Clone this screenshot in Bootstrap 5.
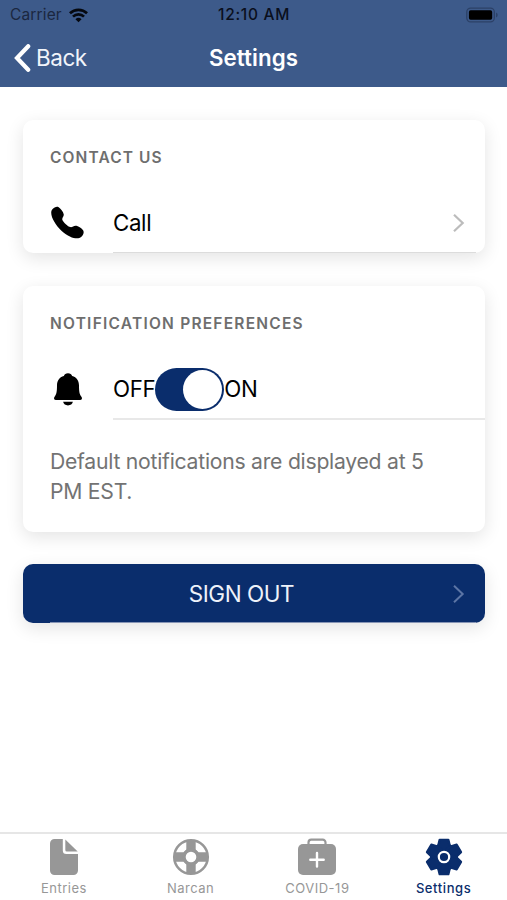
<!DOCTYPE html>
<html lang="en">
<head>
<meta charset="utf-8">
<meta name="viewport" content="width=device-width, initial-scale=1">
<title>Settings</title>
<link rel="stylesheet" href="https://cdn.jsdelivr.net/npm/bootstrap@5.3.0/dist/css/bootstrap.min.css">
<style>
  body { font-family: Inter, "Liberation Sans", sans-serif; color: #000; background: #fff; }
  svg { display: block; flex: none; }
  .screen { height: 900px; overflow: hidden; }
  .app-header { background: #3d5a8a; height: 87px; }
  .status-row { height: 30px; font-size: 15.5px; line-height: 30px; color: #0c1220; padding: 0 9px 0 10px; }
  .status-row .carrier { letter-spacing: .15px; color: #1b2740; }
  .status-row .wifi { margin-left: 7px; }
  .status-row .clock { font-weight: 500; letter-spacing: .7px; color: #0a0f1c; }
  .title-row { height: 56px; color: #fff; padding: 0 14px; }
  .back-label { font-size: 22.5px; letter-spacing: -.45px; line-height: 30px; margin-left: 5px; color: #f1f4fa; }
  .title-row h1 { font-size: 22.3px; font-weight: 600; letter-spacing: .1px; line-height: 30px; }
  .content { padding: 33px 22px 0 23px; }
  .panel { border-radius: 10px; background: #fff; box-shadow: 0 5px 18px rgba(0,0,0,.11); }
  .panel-contact { height: 133px; margin-bottom: 33px; }
  .panel-notify { height: 246px; margin-bottom: 32px; }
  .panel h2 { font-size: 15.5px; font-weight: 600; letter-spacing: 1.23px; line-height: 20px; color: #6e6e6e; padding: 28px 27px 0; }
  .panel-contact h2 { letter-spacing: 1.1px; }
  .item { height: 60px; padding-left: 27px; }
  .item-icon { width: 63px; }
  .item-body { font-size: 22.3px; letter-spacing: -.35px; line-height: 30px; }
  .item-contact { margin-top: 25px; }
  .item-contact .item-body { border-bottom: 1px solid #dcdcdc; margin-right: 9px; padding-right: 11px; padding-top: 1px; }
  .item-notify { margin-top: 25px; }
  .item-notify .item-body { border-bottom: 2px solid #e8e8e8; padding-top: 1px; height: 61px; }
  .toggle { width: 69px; height: 43px; border-radius: 22px; background: #0a2d6c; padding: 2px; }
  .toggle-knob { width: 39px; height: 39px; border-radius: 50%; background: #fff; }
  .note { font-size: 21.2px; line-height: 29.5px; letter-spacing: -.26px; color: #737373; padding: 28px 50px 0 27px; }
  .btn-signout { height: 59px; border: 0; border-radius: 10px; background: linear-gradient(#8795b5, #8795b5) 27px 100% / calc(100% - 36px) 1px no-repeat #0a2d6c; color: #eef2fa; font-size: 22.5px; letter-spacing: -.45px; box-shadow: 0 5px 18px rgba(0,0,0,.11); padding: 0 20px 0 8px; }
  .tabs { height: 68px; border-top: 2px solid #e6e6e6; }
  .tab { color: #979797; font-size: 13px; letter-spacing: .5px; line-height: 16px; padding: 4px 0 0 1px; width: 25%; }
  .tab span { margin-top: 4px; }
  .tab.current { color: #0a2d6c; font-weight: 500; letter-spacing: .6px; padding-left: 0; }
</style>
</head>
<body>
<div class="screen d-flex flex-column">
  <header class="app-header">
    <div class="status-row row g-0 align-items-center">
      <div class="col d-flex align-items-center">
        <span class="carrier">Carrier</span>
        <svg class="wifi" width="19" height="15" viewBox="0 0 20 15" fill="none" stroke="#05080f" stroke-width="2.8"><path d="M1 5.200a13 13 0 0 1 18 0M4.200 8.700a8.300 8.300 0 0 1 11.600 0"/><path d="M10 14.600 6.800 11.400a4.600 4.600 0 0 1 6.400 0z" fill="#05080f" stroke="none"/></svg>
      </div>
      <div class="col-auto clock">12:10 AM</div>
      <div class="col d-flex justify-content-end">
        <svg width="32" height="16" viewBox="0 0 33 16"><rect x=".8" y=".8" width="28.400" height="14.400" rx="4" fill="none" stroke="#2c4167" stroke-width="1.300"/><rect x="3" y="3" width="24" height="10" rx="1.800" fill="#000"/><path d="M31 5.500v5q1.700-.8 1.700-2.500T31 5.500z" fill="#2c4167"/></svg>
      </div>
    </div>
    <nav class="title-row row g-0 align-items-center">
      <a class="col d-flex align-items-center text-decoration-none" href="#">
        <svg width="17" height="28" viewBox="0 0 17 28" fill="none" stroke="#fff" stroke-width="4.200" stroke-linecap="round" stroke-linejoin="miter"><path d="M14.200 2.200 3 14l11.200 11.800"/></svg>
        <span class="back-label">Back</span>
      </a>
      <h1 class="col-auto mb-0">Settings</h1>
      <div class="col"></div>
    </nav>
  </header>

  <main class="content flex-grow-1">
    <section class="panel panel-contact">
      <h2 class="mb-0">CONTACT US</h2>
      <div class="item item-contact d-flex align-items-stretch">
        <div class="item-icon d-flex align-items-center">
          <svg width="35" height="34" viewBox="0 0 35 34"><path d="M2.400 3.200C4.300 1.300 6.800-.1 8.700 1.200c2.300 1.600 4.500 4.600 5 7 .5 2.400-2.100 3.800-1.300 5.700 1.100 2.500 5.500 6.600 7.900 7.200 2.100.5 3.600-2 6.200-1.300 2.300.6 5.200 2.600 6.600 4.500 1.300 1.900.2 4.600-2 6.700-3.200 3-11.500 1-19.400-6.100C3.900 17.700-1.200 7 2.400 3.200z"/></svg>
        </div>
        <div class="item-body flex-grow-1 d-flex justify-content-between align-items-center">
          <span>Call</span>
          <svg width="13" height="20" viewBox="0 0 13 20" fill="none" stroke="#bcbcbc" stroke-width="2.200"><path d="m2 1.700 8.700 8.300L2 18.300"/></svg>
        </div>
      </div>
    </section>

    <section class="panel panel-notify">
      <h2 class="mb-0">NOTIFICATION PREFERENCES</h2>
      <div class="item item-notify d-flex align-items-start">
        <div class="item-icon d-flex align-items-center align-self-stretch ps-1">
          <svg width="28" height="33" viewBox="0 0 28 33"><path d="M14 .3c2.200 0 3.500 1.100 4.100 2.600 4.600 1.300 6.900 4.800 6.900 9.600 0 5.900.5 8.900 2.400 11.300 1.100 1.500.5 3.200-1.100 3.200H1.700c-1.600 0-2.200-1.700-1.100-3.200C2.500 21.400 3 18.400 3 12.500c0-4.800 2.300-8.300 6.900-9.600C10.500 1.400 11.800.3 14 .3zM9.100 28.800h9.800c-.5 2.200-2.400 3.600-4.900 3.600s-4.400-1.400-4.900-3.600z"/></svg>
        </div>
        <div class="item-body flex-grow-1 d-flex align-items-center">
          <span>OFF</span>
          <div class="toggle d-flex justify-content-end align-items-center" role="switch" aria-checked="true"><div class="toggle-knob"></div></div>
          <span>ON</span>
        </div>
      </div>
      <p class="note mb-0">Default notifications are displayed at 5 PM EST.</p>
    </section>

    <button type="button" class="btn btn-signout w-100 d-flex align-items-center">
      <span class="flex-grow-1 text-center">SIGN OUT</span>
      <svg width="13" height="20" viewBox="0 0 13 20" fill="none" stroke="#5c75a5" stroke-width="2"><path d="m2 1.700 8.700 8.300L2 18.300"/></svg>
    </button>
  </main>

  <footer class="tabs d-flex">
    <div class="tab d-flex flex-column align-items-center">
      <svg width="38" height="38" viewBox="0 0 38 38" fill="#979797"><path d="M9.500 1H17.800V12.500a3.500 3.500 0 0 0 3.500 3.500H33V32.500a4.500 4.500 0 0 1-4.500 4.500h-19A4.500 4.500 0 0 1 5 32.500v-27A4.500 4.500 0 0 1 9.500 1z"/><path d="M20.300 1.500 32.700 13.500H21.800a1.500 1.500 0 0 1-1.500-1.500z"/></svg>
      <span>Entries</span>
    </div>
    <div class="tab d-flex flex-column align-items-center">
      <svg width="38" height="38" viewBox="0 0 38 38" fill="#979797"><circle cx="19" cy="19" r="16.800" fill="none" stroke="#979797" stroke-width="2.500"/><path d="M14.300 2h9.400v9.500l2.800 2.800h9.500v9.400H26.500l-2.800 2.800V36h-9.400V26.500l-2.800-2.800H2v-9.400h9.500l2.800-2.800z"/><circle cx="19" cy="19" r="8.500"/><circle cx="19" cy="19" r="5.300" fill="#fff"/></svg>
      <span>Narcan</span>
    </div>
    <div class="tab d-flex flex-column align-items-center">
      <svg width="38" height="38" viewBox="0 0 38 38"><rect y="6" width="38" height="31" rx="5" fill="#979797"/><path d="M10.500 6V4.500a2.800 2.800 0 0 1 2.800-2.800h11.400a2.800 2.800 0 0 1 2.800 2.800V6" fill="none" stroke="#979797" stroke-width="2.200"/><path d="M19 15v13.500M12.300 21.700h13.400" stroke="#fff" stroke-width="2.400" stroke-linecap="round"/></svg>
      <span>COVID-19</span>
    </div>
    <div class="tab current d-flex flex-column align-items-center">
      <svg width="38" height="38" viewBox="0 0 38 38" fill="#0a2d6c" stroke="#0a2d6c" stroke-linejoin="round"><circle cx="19" cy="19" r="14" stroke="none"/><g stroke-width="2.400"><path id="tooth" d="M14.700 1.900h8.600l1.400 5.600-1.400 11.500h-8.600l-1.400-11.500z"/><use href="#tooth" transform="rotate(60 19 19)"/><use href="#tooth" transform="rotate(120 19 19)"/><use href="#tooth" transform="rotate(180 19 19)"/><use href="#tooth" transform="rotate(240 19 19)"/><use href="#tooth" transform="rotate(300 19 19)"/></g><circle cx="19" cy="19" r="5.200" fill="none" stroke="#fff" stroke-width="2.200"/></svg>
      <span>Settings</span>
    </div>
  </footer>
</div>
<script src="https://cdn.jsdelivr.net/npm/bootstrap@5.3.0/dist/js/bootstrap.bundle.min.js"></script>
</body>
</html>
